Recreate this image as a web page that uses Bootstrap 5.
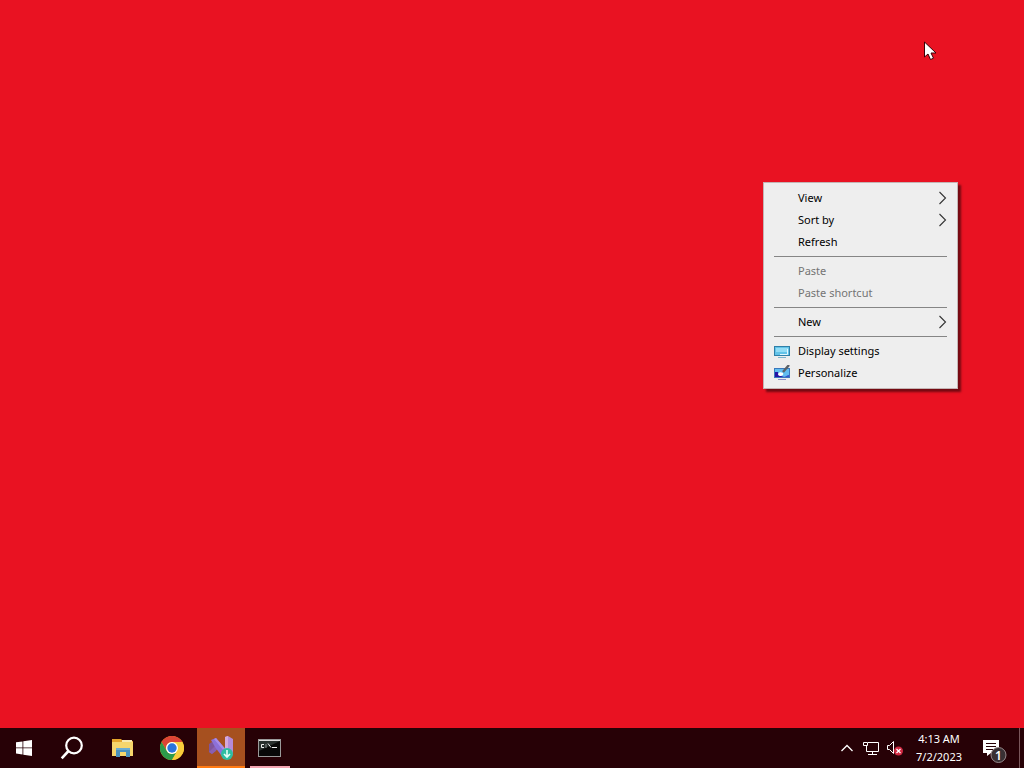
<!DOCTYPE html>
<html lang="en">
<head>
<meta charset="utf-8">
<meta name="viewport" content="width=device-width, initial-scale=1">
<title>Desktop</title>
<link href="https://cdn.jsdelivr.net/npm/bootstrap@5.3.0/dist/css/bootstrap.min.css" rel="stylesheet">
<style>
  body { background: #e91222; font-family: "Noto Sans", "Open Sans", sans-serif; font-size: 11px; cursor: default; }
  svg { display: block; flex: none; }
  .desk-menu { left: 763px; top: 182px; width: 195px; padding: 4px 0; background: #eee; border: 1px solid #c4b4b4; box-shadow: 3px 3px 2px rgba(0,0,0,.5); }
  .desk-menu button { width: 100%; height: 22px; padding: 0 10px; border: 0; background: none; color: #000; font-size: 11px; line-height: 22px; }
  .desk-menu button:hover:enabled { background: #fff; }
  .desk-menu button:disabled { color: #747474; }
  .menu-icon { width: 16px; margin-right: 8px; }
  .desk-menu hr { margin: 3px 10px; border-top: 1px solid #858585; opacity: 1; }
  .pointer { left: 924px; top: 41px; }
  .taskbar { height: 40px; background: #270106; color: #fff; }
  .taskbar button { border: 0; padding: 0; background: none; color: #fff; }
  .app-btn { width: 48px; height: 40px; }
  .app-group { margin-left: 3px; gap: 1px; }
  .taskbar .attention { background: #a6501f; border-bottom: 2px solid #ff7a12; padding-top: 2px; }
  .running::after { content: ""; position: absolute; left: 4px; right: 4px; bottom: 0; height: 2px; background: #f4a5b2; }
  .tray-btn { width: 24px; height: 40px; }
  .taskbar .clock { width: 64px; font-size: 11px; line-height: 18px; }
  .taskbar .peek { width: 5px; border-left: 1px solid #79575b; }
</style>
</head>
<body class="vh-100 d-flex flex-column overflow-hidden">
<main class="flex-grow-1">
  <div class="desk-menu position-absolute" role="menu" aria-label="Desktop">
    <button class="d-flex align-items-center" role="menuitem"><span class="menu-icon"></span>View
      <svg class="ms-auto" width="9" height="14" fill="none" stroke="#333" stroke-width="1.1"><path d="M1.5 1 7.500 7l-6 6"/></svg></button>
    <button class="d-flex align-items-center" role="menuitem"><span class="menu-icon"></span>Sort by
      <svg class="ms-auto" width="9" height="14" fill="none" stroke="#333" stroke-width="1.1"><path d="M1.5 1 7.500 7l-6 6"/></svg></button>
    <button class="d-flex align-items-center" role="menuitem"><span class="menu-icon"></span>Refresh</button>
    <hr>
    <button class="d-flex align-items-center" role="menuitem" disabled><span class="menu-icon"></span>Paste</button>
    <button class="d-flex align-items-center" role="menuitem" disabled><span class="menu-icon"></span>Paste shortcut</button>
    <hr>
    <button class="d-flex align-items-center" role="menuitem"><span class="menu-icon"></span>New
      <svg class="ms-auto" width="9" height="14" fill="none" stroke="#333" stroke-width="1.1"><path d="M1.5 1 7.500 7l-6 6"/></svg></button>
    <hr>
    <button class="d-flex align-items-center" role="menuitem"><span class="menu-icon">
      <svg width="16" height="16"><path fill="#2f7fa8" d="M0 3h16v10H0z"/><path fill="#62c3e8" d="M1 4h14v8H1z"/><path fill="#93dcf5" d="M2 5h12v4H2z"/><path fill="none" stroke="#e2f8ff" d="M6 11.500h7.500V6"/><path fill="#7fb4cc" d="M4 14h8v1H4z"/></svg></span>Display settings</button>
    <button class="d-flex align-items-center" role="menuitem"><span class="menu-icon">
      <svg width="16" height="16"><path fill="#3b78bd" d="M0 3h16v10H0z"/><path fill="#61bdf0" d="M1 4h14v8H1z"/><path fill="#2512a5" d="M1 7h3c0 3 3 4 6 5H1z"/><path fill="#fff" d="M4 9c1-2 3-2 5-1 1 2-1 3-3 3-1 0-2-1-2-2z"/><path fill="#3554d0" d="M9 12c3 0 4-2 6-2v2z"/><path fill="none" stroke="#5b6167" stroke-width="2.400" d="m9 7 6-7"/><path fill="#8a8fc8" d="M4 14h8v1H4z"/></svg></span>Personalize</button>
  </div>
  <svg class="pointer position-absolute" width="14" height="20" aria-hidden="true"><path fill="#fff" stroke="#3a0008" stroke-width="1" d="M.500 1v15l3.500-3 2.500 5.500 3-1.300L7 12h5z"/></svg>
</main>
<footer class="taskbar d-flex">
  <button class="app-btn d-flex align-items-center justify-content-center" aria-label="Start">
    <svg width="16" height="16" fill="#fff"><path d="M0 2.300 6.500 1.400v6.100H0zM7.300 1.300 16 0v7.500H7.300zM0 8.300h6.500v6.200L0 13.600zM7.300 8.300H16V16l-8.700-1.300z"/></svg></button>
  <button class="app-btn d-flex align-items-center justify-content-center" aria-label="Search">
    <svg width="24" height="24" fill="none" stroke="#fff" stroke-width="2.200"><circle cx="14" cy="9.500" r="7.800"/><path d="M8.500 15 1.700 22.300" stroke-width="2.600"/></svg></button>
  <div class="app-group d-flex">
    <button class="app-btn d-flex align-items-center justify-content-center" aria-label="File Explorer">
      <svg width="24" height="20"><path fill="#e5a52b" d="M1 1h9l2 2h10v5H1z"/><path fill="#f8e9b0" d="M11 2h10v2H11z"/><path fill="#f6d66c" d="M1 4h21v14H1z"/><path fill="#4a91bd" d="M5 10h14v9h-4v-5H9v5H5z"/><path fill="#6badd2" d="M5 10h14v2H5z"/></svg></button>
    <button class="app-btn d-flex align-items-center justify-content-center" aria-label="Google Chrome">
      <svg width="24" height="24" viewBox="0 0 24 24"><circle cx="12" cy="12" r="12" fill="#fbc116"/><path fill="#dc4436" d="M1.600 6A12 12 0 0 1 22.400 6H12a6 6 0 0 0-5.200 9z"/><path fill="#2c9a4b" d="M1.600 6 6.800 15a6 6 0 0 0 10.400 0L12 24A12 12 0 0 1 1.600 6z"/><path fill="#f8cc3c" d="M22.400 6A12 12 0 0 1 12 24l5.200-9A6 6 0 0 0 12 6z"/><circle cx="12" cy="12" r="6" fill="#fff"/><circle cx="12" cy="12" r="4.700" fill="#2b74dc"/></svg></button>
    <button class="app-btn attention d-flex align-items-center justify-content-center" aria-label="Visual Studio Installer">
      <svg width="24" height="24"><path fill="#80549a" d="m0 8 3-2 4 4v5l-4 3-3-2z"/><path fill="#8a5fb0" d="m0 16 7-7 3 3-7 6z"/><path fill="#8c70d8" d="m2 4 5-2 12 14v6l-4 1L6 11z"/><path fill="#a98be6" d="m5 3 2-1 12 14v4z"/><path fill="#b58ad8" d="m16 1 3-1 5 3v16l-8 2z"/><path fill="#d5a8dc" d="m16 1 3-1v18l-3 3z"/><circle cx="18" cy="18" r="6" fill="#2fbda0"/><path fill="none" stroke="#e4fff5" stroke-width="1.600" d="M18 14v7m-3-3 3 3 3-3"/></svg></button>
    <button class="app-btn running position-relative d-flex align-items-center justify-content-center" aria-label="Command Prompt">
      <svg width="24" height="20"><path fill="#9a9a9a" d="M0 1h23v18H0z"/><path fill="#ddd" d="M1 2h21v1H1z"/><path fill="#080808" d="M1 3h21v15H1z"/><path fill="#29302e" d="M1 3h21L1 13z"/><path fill="none" stroke="#eee" d="M6 6.500H3.500v3H6m2-3v1m0 1v1m2-4 3 4m1 0h5"/></svg></button>
  </div>
  <div class="d-flex ms-auto">
    <button class="tray-btn d-flex align-items-center justify-content-center" aria-label="Show hidden icons">
      <svg width="14" height="8" fill="none" stroke="#fff" stroke-width="1.300"><path d="m1.500 7 5.500-5.500L12.500 7"/></svg></button>
    <button class="tray-btn d-flex align-items-center justify-content-center" aria-label="Network">
      <svg width="16" height="14" fill="none" stroke="#fff"><path d="M5 1.500h10.500v9H3.500V5M9.500 10.500v3M5 13.500h9M.500 1.500h4v3h-4z"/></svg></button>
    <button class="tray-btn d-flex align-items-center justify-content-center" aria-label="Volume muted">
      <svg width="16" height="16"><path fill="none" stroke="#fff" d="M.500 5.500h2l4-4v12l-4-4h-2z"/><circle cx="11.500" cy="11" r="4.500" fill="#cf2942"/><path stroke="#fff" stroke-width="1.200" d="m9.500 9 4 4m0-4-4 4"/></svg></button>
    <button class="clock text-center text-nowrap">4:13 AM<br>7/2/2023</button>
    <button class="app-btn d-flex align-items-center justify-content-center" aria-label="1 new notification">
      <svg class="mt-2" width="26" height="24"><path fill="#fff" d="M1 0h16v13H9l-4 3v-3H1z"/><path stroke="#270106" d="M4 3.500h10M4 6.500h10M4 9.500h7"/><circle cx="16.500" cy="15" r="7.500" fill="#393033" stroke="#96888b"/><text x="16.500" y="19.500" fill="#fff" font-size="12" font-weight="600" text-anchor="middle">1</text></svg></button>
    <button class="peek" aria-label="Show desktop"></button>
  </div>
</footer>
<script src="https://cdn.jsdelivr.net/npm/bootstrap@5.3.0/dist/js/bootstrap.bundle.min.js"></script>
</body>
</html>
